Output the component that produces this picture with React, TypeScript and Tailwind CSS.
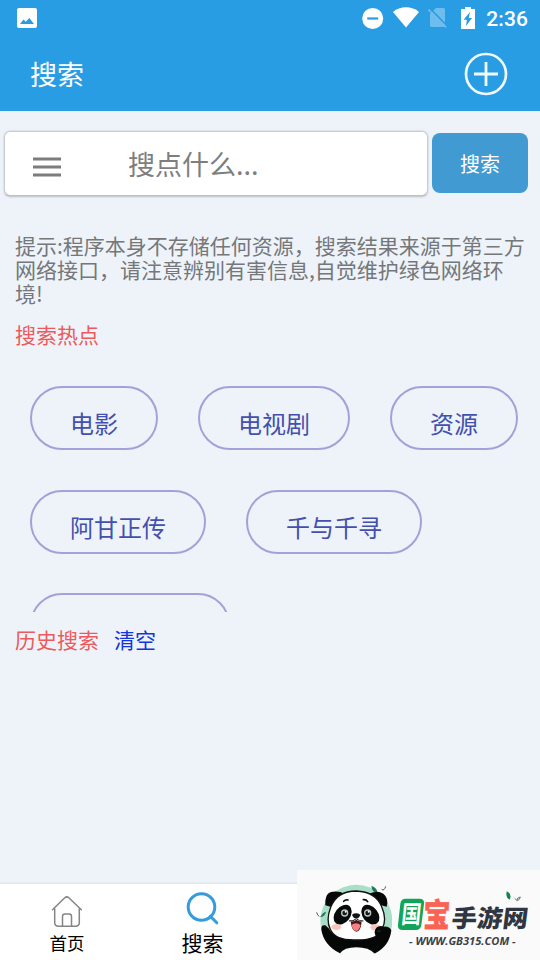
import type { ReactNode } from "react";

const hotTags = ["电影", "电视剧", "资源", "阿甘正传", "千与千寻"];

function StatusBar() {
  return (
    <div className="flex h-9 items-center pl-[17px] pr-[12px]">
      <svg className="h-5 w-5" viewBox="0 0 20 20">
        <rect width="20" height="20" rx="2" fill="#fff" />
        <path d="M3 16l3.500-4.500 2.300 2.300L12.300 10 17 16z" fill="#299de4" />
      </svg>
      <div className="ml-auto flex items-center font-['Roboto',sans-serif]">
        {/* Do not disturb */}
        <svg className="mr-[9px] h-[22px] w-[22px]" viewBox="0 0 22 22">
          <circle cx="10.700" cy="11.500" r="10.500" fill="#fff" />
          <path d="M5.200 11.500h11" stroke="#299de4" strokeWidth="2.200" />
        </svg>
        {/* Wifi */}
        <svg className="mr-[9px] h-[22px] w-[26px]" viewBox="0 0 26 22">
          <path d="M0 5C7-1.200 19-1.200 26 5L13 20.500z" fill="#fff" />
        </svg>
        {/* No sim */}
        <svg className="mr-[14px] h-[22px] w-[19px]" viewBox="0 0 19 22">
          <path d="M8 1h7.500q1.500 0 1.500 1.500v16q0 1.500-1.500 1.500H3.500Q2 20 2 18.500V7z" fill="#6fbcee" />
          <path d="M1.800 1.200l17.600 17.900" stroke="#299de4" strokeWidth="1.600" />
          <path d="M.5 2.500l17.600 17.900" stroke="#6fbcee" strokeWidth="1.700" />
        </svg>
        {/* Battery */}
        <svg className="mr-[11px] h-[22px] w-[14px]" viewBox="0 0 14 22">
          <path d="M4 0h6v2h4v20H0V2h4z" fill="#fff" />
          <path d="M9 5L2.500 12.800h3.300L5 19l6-8H7.800z" fill="#299de4" />
        </svg>
        <span className="pt-px text-[21px] font-medium leading-9 tracking-[0.1px] text-white">2:36</span>
      </div>
    </div>
  );
}

function Header() {
  return (
    <header className="h-[111px] shrink-0 bg-[#299de4]">
      <StatusBar />
      <div className="flex h-[75px] items-center justify-between pl-[30px] pr-8">
        <h1 className="text-[27px] leading-[75px] text-white">搜索</h1>
        <svg className="h-[44px] w-[44px]" viewBox="0 0 44 44" fill="none" stroke="#f0faff">
          <circle cx="22" cy="22" r="20" strokeWidth="2.700" />
          <path d="M10 22h24M22 10v24" strokeWidth="2.800" />
        </svg>
      </div>
    </header>
  );
}

function SearchBar() {
  return (
    <div className="flex items-start gap-[5px] pl-[5px] pt-[21px]">
      <div className="flex h-[63px] w-[422px] items-center rounded-[5px] bg-white pl-7 shadow-[0_0.5px_2px_1px_rgba(0,0,0,0.22)]">
        <svg className="mt-[7px] h-[22px] w-7" viewBox="0 0 28 22" stroke="#7d7d7d" strokeWidth="2.800">
          <path d="M0 3h28M0 11h28M0 19h28" />
        </svg>
        <span className="ml-[67px] text-[27px] leading-[63px] text-[#7e7e7e]">搜点什么...</span>
      </div>
      <button className="mt-px h-[60px] w-24 rounded-[8px] bg-[#429ad2] pt-px text-[20px] leading-[60px] text-white">搜索</button>
    </div>
  );
}

function Tag({ children }: { children?: ReactNode }) {
  return (
    <div className="h-16 min-w-[128px] rounded-full border-2 border-[#a2a2d8] px-[38px] pt-[5px] text-[24px] leading-[60px] text-[#4350ad]">
      {children}
    </div>
  );
}

function Tab({ icon, children }: { icon: ReactNode; children: ReactNode }) {
  return (
    <div className="flex w-[135px] flex-col items-center">
      {icon}
      {children}
    </div>
  );
}

function TabBar() {
  return (
    <nav className="flex h-[76px] shrink-0 bg-white shadow-[0_-1px_2px_rgba(0,0,0,0.08)]">
      <Tab
        icon={
          <svg className="mr-px mt-[11px] h-8 w-8" viewBox="0 0 32 32" fill="none" stroke="#858585" strokeWidth="1.500" strokeLinecap="round" strokeLinejoin="round">
            <path d="M1.500 14.800L13.800 2.700q2-1.700 4 0L30.300 14.800M3.700 13.500V27.500q0 3.700 3.700 3.700h17.200q3.700 0 3.700-3.700V13.500M11.500 31V21.500q0-2.500 2.500-2.500h4q2.500 0 2.500 2.500V31" />
          </svg>
        }
      >
        <span className="mr-px text-[17.500px] leading-[32px] text-black">首页</span>
      </Tab>
      <Tab
        icon={
          <svg className="mt-[6px] h-9 w-9" viewBox="0 0 36 36" fill="none" stroke="#359cdc" strokeWidth="3">
            <circle cx="16.500" cy="17" r="13.300" />
            <path d="M25.300 26.300l6.500 6.500" strokeLinecap="round" />
          </svg>
        }
      >
        <span className="text-[21px] leading-[32px] text-black">搜索</span>
      </Tab>
    </nav>
  );
}

function Panda() {
  return (
    <svg className="h-[90px] w-[95px]" viewBox="3 15 285 270">
      <circle cx="181" cy="167" r="108" fill="#a9dfc9" />
      {/* Bamboo leaves */}
      <path d="M226 62q20 8 18 24q-16-4-18-24zM72 157q10-16 18-17q-2 14-18 17z" fill="#21785a" />
      <path d="M257 73q8 6 12-9M62 142q2 10 8 12" fill="none" stroke="#426453" strokeWidth="3" />
      {/* Ears */}
      <path d="M88 121Q86 81 111 80Q132 78 146 87L103 125zM217 88Q241 74 262 86Q279 99 272 125L256 121z" fill="#060707" />
      {/* Body and arms */}
      <path d="M76 194Q75 178 88 181L98 190Q112 220 181 223Q228 222 240 194Q247 181 263 185Q280 183 286 196Q281 242 238 265H132Q83 240 76 194z" fill="#060707" />
      <path d="M132 265Q144 247 181 247Q219 247 235 265q-20 12-54 12t-49-12z" fill="#fafafa" />
      {/* Head */}
      <path d="M181 78Q239 80 257 125Q274 164 258 192Q246 226 181 225Q116 227 103 193Q89 166 104 127Q123 78 181 78z" fill="#fff" stroke="#111" strokeWidth="4" />
      <path d="M143 109q5-6 13-4M202 104q9-1 13 6" fill="none" stroke="#111" strokeWidth="5" strokeLinecap="round" />
      <ellipse cx="140" cy="149" rx="23" ry="33" transform="rotate(38 140 149)" fill="#090a0a" />
      <ellipse cx="223" cy="149" rx="23" ry="33" transform="rotate(-38 223 149)" fill="#090a0a" />
      <circle cx="146" cy="144" r="11" fill="#b9c6c2" />
      <circle cx="146" cy="144" r="7" fill="#151818" />
      <circle cx="149" cy="140" r="3" fill="#fff" />
      <circle cx="215" cy="144" r="11" fill="#b9c6c2" />
      <circle cx="215" cy="144" r="7" fill="#151818" />
      <circle cx="218" cy="140" r="3" fill="#fff" />
      <ellipse cx="121" cy="186" rx="15" ry="9" fill="#fac4b9" />
      <ellipse cx="238" cy="187" rx="15" ry="9" fill="#fac4b9" />
      <path d="M168 149q12-8 25 0q-3 11-12 11q-10 0-13-11z" fill="#181111" />
      <path d="M160 168q12 2 21-7q9 9 20 7" fill="none" stroke="#111" strokeWidth="3" strokeLinecap="round" />
      <path d="M164 169q10 2 17-5q8 7 16 5q-2 31-16 31q-14-1-17-31z" fill="#471718" />
      <path d="M166 180q14-10 28 0q-5 18-14 18q-10-1-14-18z" fill="#f48183" />
      {/* Paw */}
      <ellipse cx="254" cy="202" rx="18" ry="19" fill="#060707" />
      <path d="M244 200q5-6 10-1" fill="none" stroke="#4b4b4b" strokeWidth="2" />
    </svg>
  );
}

function Brand() {
  return (
    <svg className="h-[90px] w-[148px]" viewBox="6 15 444 270">
      <path d="M47 101H88Q104 101 102 116L94 180Q92 195 77 195H38Q22 195 24 180L31 116Q33 101 47 101z" fill="#12a45b" />
      <text transform="matrix(0.92 0 -0.12 1.14 32 174)" fontSize="64" fontWeight="700" fill="#fff">国</text>
      <text transform="matrix(0.9 0 -0.05 1.1 98 186)" fontSize="90" fontWeight="900" fill="#fa6254" stroke="#fa6254" strokeWidth="1">宝</text>
      <text transform="matrix(1 0 -0.12 0.95 182 187)" fontSize="76" fontWeight="900" textLength="229" fill="#303641">手游网</text>
      <path d="M350 79q17 7 9 25q-13-6-9-25z" fill="#14854e" />
      <path d="M374 100l8 7q7-2 9-11q-10 1-10 10" fill="none" stroke="#66776d" strokeWidth="3" />
      <text x="57" y="241" fontSize="33" fontWeight="700" fontStyle="italic" textLength="320" lengthAdjust="spacingAndGlyphs" fill="#3b404b" className="font-['Open_Sans',sans-serif]">- WWW.GB315.COM -</text>
    </svg>
  );
}

export default function App() {
  return (
    <div className="relative flex h-[960px] w-[540px] flex-col overflow-hidden bg-[#edf3f9] font-['Noto_Sans_CJK_SC',sans-serif]">
      <Header />

      <main className="flex-1">
        <SearchBar />

        <p className="ml-[15px] mt-[38px] w-[511px] text-[21px] leading-6 text-[#757779]">
          提示:程序本身不存储任何资源，搜索结果来源于第三方网络接口，请注意辨别有害信息,自觉维护绿色网络环境!
        </p>
        <h2 className="ml-[15px] mt-[17px] text-[21px] leading-6 text-[#ee5a5c]">搜索热点</h2>

        {/* The third row is cut off by the box */}
        <div className="mt-[40px] flex h-[226px] flex-wrap content-start gap-x-10 gap-y-[39.5px] overflow-hidden pl-[30px]">
          {hotTags.map((tag) => (
            <Tag key={tag}>{tag}</Tag>
          ))}
          <div className="h-16 w-[200px] rounded-full border-2 border-[#a2a2d8]" />
        </div>

        <div className="ml-[15px] mt-[15px] flex gap-[15px] text-[21px] leading-6">
          <span className="text-[#ee5a5c]">历史搜索</span>
          <button className="text-[#1235df]">清空</button>
        </div>
      </main>

      <TabBar />

      <div className="absolute bottom-0 right-0 flex h-[90px] w-[243px] bg-[#fafafa]">
        <Panda />
        <Brand />
      </div>
    </div>
  );
}
